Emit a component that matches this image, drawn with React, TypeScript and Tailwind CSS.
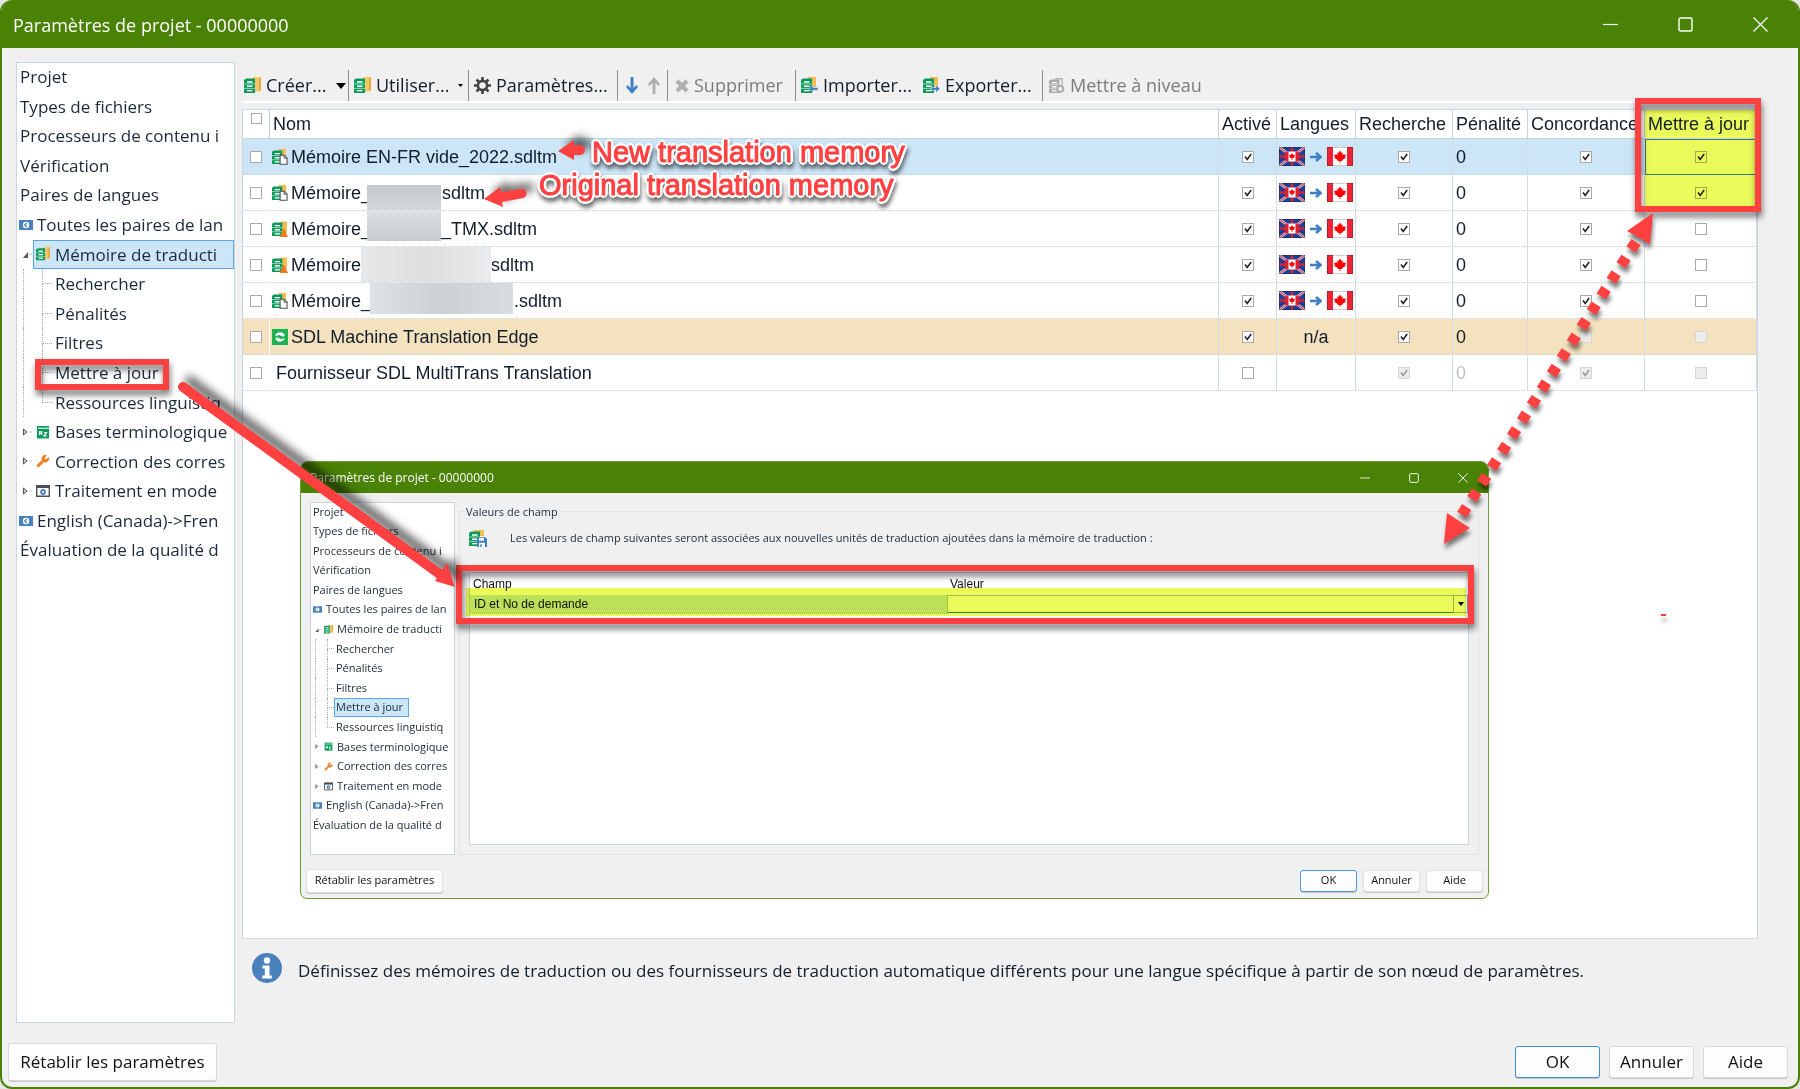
import React, { useState } from "react";
import { Wrench } from "lucide-react";
import { clsx } from "clsx";

type IconProps = { className?: string };

/* ---------- Icons ---------- */

function Slabs({ color = "#0b9a5a" }: { color?: string }) {
  return (
    <g>
      <path d="M0 3 2 1.500h9V16H0z" fill={color} />
      <path d="M3 5h5.500M3 9.300h5.500M3 13.600h5.500" stroke="#fff" strokeWidth="1.400" />
      <path d="M0 7h11M0 11.400h11" stroke="#fff" strokeOpacity=".7" strokeWidth=".8" />
    </g>
  );
}

function MemoryIcon({ className }: IconProps) {
  return (
    <svg viewBox="0 0 17 17" className={className}>
      <path d="M8 1.500 10 0h7v13l-2 1.500H8z" fill="#f6c768" />
      <path d="M15 1.500 17 0v13l-2 1.500z" fill="#e9a93a" />
      <Slabs />
    </svg>
  );
}

function FileMemoryIcon({ className }: IconProps) {
  return (
    <svg viewBox="0 0 17 17" className={className}>
      <path d="M7 0h8v7H7z" fill="#f2bd55" />
      <Slabs />
      <path d="M8.600 6.600h4.600l2.800 2.900v6.700H8.600z" fill="#fff" stroke="#4a4a4a" strokeWidth="1.100" />
      <path d="M12.800 6.800v3h3" fill="none" stroke="#4a4a4a" />
    </svg>
  );
}

function WarningMemoryIcon({ className }: IconProps) {
  return (
    <svg viewBox="0 0 17 17" className={className}>
      <path d="M8 1.500 10 .5h6v12H8z" fill="#f2bd55" />
      <Slabs />
      <path d="M12.500 8 17 17H8z" fill="#ee7a1f" />
    </svg>
  );
}

function TransferMemoryIcon({ className, flip }: IconProps & { flip?: boolean }) {
  return (
    <svg viewBox="0 0 17 17" className={className}>
      <path d="M7 0h8v10H7z" fill="#f2bd55" />
      <Slabs />
      <g transform={flip ? "translate(25 0) scale(-1 1)" : undefined}>
        <path
          d="M8 11.800 12 7.800v2.600h5v2.800h-5v2.600z"
          fill="#3f7fc4"
          stroke="#f0f0f0"
          strokeWidth=".6"
        />
      </g>
    </svg>
  );
}

function UpgradeIcon({ className }: IconProps) {
  return (
    <svg viewBox="0 0 17 17" className={className}>
      <path d="M6 .8h8v6" fill="none" stroke="#b5b5b5" strokeWidth="1.500" />
      <Slabs color="#aaaaaa" />
      <circle cx="12" cy="11.500" r="3.200" fill="#f0f0f0" stroke="#aaa" strokeWidth="2" />
    </svg>
  );
}

function GearIcon({ className }: IconProps) {
  return (
    <svg viewBox="0 0 17 17" className={className}>
      <circle cx="8.500" cy="8.500" r="4.600" fill="none" stroke="#444" strokeWidth="2.600" />
      <path
        d="M8.500 0v4M8.500 13v4M0 8.500h4M13 8.500h4M2.500 2.500l2.800 2.800M11.700 11.700l2.800 2.800M14.500 2.500l-2.800 2.800M5.300 11.700l-2.800 2.800"
        stroke="#444"
        strokeWidth="2.600"
      />
    </svg>
  );
}

function SaveMemoryIcon({ className }: IconProps) {
  return (
    <svg viewBox="0 0 18 17" className={className}>
      <path d="M5 0h10v6H5z" fill="#f2bd55" />
      <Slabs />
      <path d="M8 7h8l2 2v8H8z" fill="#3f7fc4" />
      <path d="M10 7.800h5v3h-5zM10 12.800h6V17h-6z" fill="#fff" />
      <path d="M11.300 14.200h1.500V17h-1.500z" fill="#3f7fc4" />
    </svg>
  );
}

function EdgeIcon({ className }: IconProps) {
  return (
    <svg viewBox="0 0 15 15" className={className}>
      <path d="M0 0h15v15H0z" fill="#1fb254" />
      <path d="M3 6.500a4.800 4.800 0 0 1 9-.5c-1.500 2.200-3 .2-5-.4-1.500-.4-2.800.9-4 .9z" fill="#fff" />
      <path d="M12 8.500a4.800 4.800 0 0 1-9 .5c1.500-2.200 3-.2 5 .4 1.500.4 2.800-.9 4-.9z" fill="#fff" />
    </svg>
  );
}

function PairIcon({ className }: IconProps) {
  return (
    <svg viewBox="0 0 14 10" className={className}>
      <path d="M0 0h14v10H0z" fill="#4a80bb" />
      <circle cx="7" cy="5" r="3.200" fill="#fff" />
      <path d="M7.800 3 5.800 5l2 2" fill="none" stroke="#4a80bb" strokeWidth="1.300" />
    </svg>
  );
}

function TermIcon({ className }: IconProps) {
  return (
    <svg viewBox="0 0 14 14" className={className}>
      <path d="M1 1h12v12.500H1z" fill="#0b9a5a" />
      <path d="M2 3.200h11" stroke="#fff" />
      <path
        d="M3.500 10V6.800h2.200V10M3.500 8.500h2.200M8 7.500h2.500L8 11h2.800"
        fill="none"
        stroke="#fff"
        strokeWidth="1.200"
      />
    </svg>
  );
}

function BatchIcon({ className }: IconProps) {
  return (
    <svg viewBox="0 0 14 14" className={className}>
      <path d="M.7 1.700h12.600v10.600H.7z" fill="#fff" stroke="#4a4f55" strokeWidth="1.400" />
      <path d="M0 1h14v3H0z" fill="#4a4f55" />
      <circle cx="7" cy="8" r="2" fill="none" stroke="#3f7fc4" strokeWidth="1.800" />
    </svg>
  );
}

function ArrowIcon({ className, up }: IconProps & { up?: boolean }) {
  return (
    <svg viewBox="0 0 12 17" className={className}>
      <path
        transform={up ? "rotate(180 6 8.500)" : undefined}
        d="M4.500 0h3v11L10.500 8 12 10l-6 7-6-7 1.500-2 3 3z"
        fill={up ? "#b0b0b0" : "#3f7fc4"}
      />
    </svg>
  );
}

function CrossIcon({ className }: IconProps) {
  return (
    <svg viewBox="0 0 14 14" className={className}>
      <path d="m2 2 10 10M12 2 2 12" stroke="#b0b0b0" strokeWidth="4.200" />
    </svg>
  );
}

const leaf =
  "M13 3.500l1.300 2.200 1.400-.5-.4 2.800 1.900-1 .3 1.100h1.500l-1 2.200.6.700-3.400 2 .2 1H13.400V16h-.8v-2H10.600l.2-1-3.400-2 .6-.7-1-2.200h1.500l.3-1.100 1.900 1-.4-2.800 1.400.5z";

function CanadaFlag({ className }: IconProps) {
  return (
    <svg viewBox="0 0 26 19" className={className}>
      <path d="M0 0h26v19H0z" fill="#fff" />
      <path d="M0 0h6v19H0zM20 0h6v19h-6z" fill="#ee2436" />
      <path d={leaf} fill="#f00" />
      <path d="M.5.5h25v18H.5z" fill="none" stroke="#000" strokeOpacity=".2" />
    </svg>
  );
}

function EnglishCanadaFlag({ className }: IconProps) {
  return (
    <svg viewBox="0 0 26 19" className={className}>
      <path d="M0 0h26v19H0z" fill="#1f3f94" />
      <path d="m0 0 26 19M26 0 0 19" stroke="#e8cfdb" strokeWidth="2.600" />
      <path d="m0 0 26 19M26 0 0 19" stroke="#d2233c" strokeWidth="1" />
      <path d="M13 0v19M0 9.500h26" stroke="#d2233c" strokeWidth="2.500" />
      <path d="M6 4.500h14v10H6z" fill="#fff" />
      <path d="M6 4.500h3.500v10H6zM16.500 4.500H20v10h-3.500z" fill="#e21d2c" />
      <path d="m13 6 1.200 1.700 1.700.5-1 2.500-1.500.5v1.800h-.8v-1.800l-1.500-.5-1-2.500 1.700-.5z" fill="#f00" />
      <path d="M.5.5h25v18H.5z" fill="none" stroke="#000" strokeOpacity=".2" />
    </svg>
  );
}

function InfoIcon({ className }: IconProps) {
  return (
    <svg viewBox="0 0 30 30" className={className}>
      <circle cx="15" cy="15" r="15" fill="#4a80bb" />
      <circle cx="15" cy="7.500" r="3.200" fill="#fff" />
      <path d="M10.500 12.500h7v10h2.300v3h-9.600v-3h2.600v-7h-2.300z" fill="#fff" />
    </svg>
  );
}

/* ---------- Shared pieces ---------- */

function Check({
  label,
  checked = false,
  disabled = false,
  small = false,
  tint = false,
}: {
  label: string;
  checked?: boolean;
  disabled?: boolean;
  small?: boolean;
  tint?: boolean;
}) {
  const [on, setOn] = useState(checked);
  return (
    <span className="relative mx-auto grid w-3 place-items-center">
      <input
        type="checkbox"
        aria-label={label}
        checked={on}
        disabled={disabled}
        onChange={() => setOn(!on)}
        className={clsx(
          "appearance-none border",
          small ? "h-[11px] w-[11px]" : "h-3 w-3",
          disabled
            ? "border-[#d6d6d6] bg-[#ececec]"
            : tint
              ? "border-[#a3ad4c] bg-[#ebfa5b]"
              : "border-[#a9a9a9] bg-white"
        )}
      />
      {on && (
        <svg viewBox="0 0 12 12" className="pointer-events-none absolute h-3 w-3">
          <path
            d="M3 5.500 5.200 8.500 9.200 3"
            fill="none"
            stroke={disabled ? "#9a9a9a" : "#222"}
            strokeWidth="1.600"
          />
        </svg>
      )}
    </span>
  );
}

function WindowControls({ small = false }: { small?: boolean }) {
  const button = clsx("grid place-items-center", small ? "w-[49px]" : "w-[75px]");
  const icon = small ? "h-[10px] w-[10px]" : "h-[15px] w-[15px]";
  return (
    <div className={clsx("flex self-stretch", small && "pr-px")}>
      <button type="button" aria-label="Réduire" className={button}>
        <svg viewBox="0 0 15 15" className={icon}>
          <path d="M0 7.500h15" stroke="#fff" strokeWidth="1.200" />
        </svg>
      </button>
      <button type="button" aria-label="Agrandir" className={button}>
        <svg viewBox="0 0 15 15" className={icon}>
          <rect x="1" y="1" width="13" height="13" rx="1.500" fill="none" stroke="#fff" strokeWidth="1.400" />
        </svg>
      </button>
      <button type="button" aria-label="Fermer" className={button}>
        <svg viewBox="0 0 15 15" className={icon}>
          <path d="m.5.5 14 14M14.500.5l-14 14" stroke="#fff" strokeWidth="1.300" />
        </svg>
      </button>
    </div>
  );
}

interface TreeItem {
  label: string;
  level: 0 | 1 | 2;
  icon?: (props: IconProps) => React.ReactNode;
  expander?: "open" | "closed";
  last?: boolean;
}

const WrenchIcon = ({ className }: IconProps) => (
  <Wrench className={className} fill="#ee7a1f" stroke="#ee7a1f" strokeWidth={1} />
);

const treeItems: TreeItem[] = [
  { label: "Projet", level: 0 },
  { label: "Types de fichiers", level: 0 },
  { label: "Processeurs de contenu i", level: 0 },
  { label: "Vérification", level: 0 },
  { label: "Paires de langues", level: 0 },
  { label: "Toutes les paires de lan", level: 0, icon: PairIcon },
  { label: "Mémoire de traducti", level: 1, icon: MemoryIcon, expander: "open" },
  { label: "Rechercher", level: 2 },
  { label: "Pénalités", level: 2 },
  { label: "Filtres", level: 2 },
  { label: "Mettre à jour", level: 2 },
  { label: "Ressources linguistiq", level: 2, last: true },
  { label: "Bases terminologique", level: 1, icon: TermIcon, expander: "closed" },
  { label: "Correction des corres", level: 1, icon: WrenchIcon, expander: "closed" },
  { label: "Traitement en mode", level: 1, icon: BatchIcon, expander: "closed", last: true },
  { label: "English (Canada)->Fren", level: 0, icon: PairIcon },
  { label: "Évaluation de la qualité d", level: 0 },
];

function Tree({ selected, small = false }: { selected: string; small?: boolean }) {
  const iconSize = small ? "h-[9px] w-[9px]" : "h-[14px] w-[14px]";

  return (
    <ul
      className={clsx(
        "-mt-px grid auto-rows-fr text-[#1c2b3a]",
        small ? "h-[333px] text-[11px]" : "h-[503px] text-[17px]"
      )}
    >
      {treeItems.map((item) => {
        const Icon = item.icon;
        const isSelected = item.label === selected;
        return (
          <li key={item.label} className="flex items-stretch whitespace-nowrap">
            {/* Guide lines of the branch */}
            {item.level > 0 && (
              <span
                className={clsx(
                  "flex shrink-0 items-center",
                  small ? "w-[11px] pl-1" : "w-4 pl-[6px]"
                )}
              >
                {item.expander ? (
                  <svg viewBox="0 0 10 8" className={small ? "h-[5px] w-[7px]" : "h-2 w-[10px]"}>
                    {item.expander === "open" ? (
                      <path d="M0 8h5V2z" fill="#555" />
                    ) : (
                      <path d="M.5 1v6l3.500-3z" fill="#ccc" stroke="#555" />
                    )}
                    <path d="M6 4h4" stroke="#aaa" strokeDasharray="1 1" />
                  </svg>
                ) : (
                  <span className="self-stretch border-l border-dotted border-[#aaa]" />
                )}
              </span>
            )}
            {item.level === 2 && (
              <span className={clsx("flex shrink-0 flex-col", small ? "w-[12px] pl-[5px]" : "w-[19px] pl-[9px]")}>
                <span className="flex-1 border-b border-l border-dotted border-[#aaa]" />
                <span
                  className={clsx("flex-1 border-l border-dotted", item.last ? "border-transparent" : "border-[#aaa]")}
                />
              </span>
            )}
            <button
              type="button"
              className={clsx(
                "flex items-center border",
                small ? "px-[1px]" : "px-[2px]",
                small && item.level === 2 && "pr-[5px]",
                isSelected ? "border-[#5ba7e0] bg-[#cce5f7]" : "border-transparent",
                isSelected && item.level === 1 && "grow"
              )}
            >
              {Icon && (
                <span
                  className={clsx(
                    "flex shrink-0",
                    small ? "w-[13px]" : item.level === 1 ? "w-[19px]" : "-ml-px w-[18px]"
                  )}
                >
                  <Icon className={iconSize} />
                </span>
              )}
              {item.label}
            </button>
          </li>
        );
      })}
    </ul>
  );
}

const dialogButton =
  "rounded-[3px] border bg-[#fdfdfd] text-[#111] shadow-[0_1px_0_#c8c8c8]";

/* ---------- Toolbar ---------- */

function Separator() {
  return <span className="h-[31px] w-px bg-[#8f8f8f]" />;
}

function ToolButton({
  icon,
  label,
  className,
  disabled,
  children,
}: {
  icon: React.ReactNode;
  label: string;
  className?: string;
  disabled?: boolean;
  children?: React.ReactNode;
}) {
  return (
    <button
      type="button"
      disabled={disabled}
      className={clsx(
        "flex h-[31px] shrink-0 items-center gap-[5px] whitespace-nowrap",
        disabled ? "text-[#7c7c7c]" : "text-[#111e2b]",
        className
      )}
    >
      {icon}
      <span>{label}</span>
      {children}
    </button>
  );
}

function Toolbar() {
  const icon = "h-[17px] w-[17px]";
  return (
    <div className="flex items-center border-b-2 border-white text-[18px]">
      <ToolButton className="w-[106px] pl-[2px]" icon={<MemoryIcon className={icon} />} label="Créer...">
        <svg viewBox="0 0 10 6" className="ml-auto mr-[2px] h-[6px] w-[10px]">
          <path d="M0 0h10L5 6z" />
        </svg>
      </ToolButton>
      <Separator />
      <ToolButton className="w-[119px] pl-[5px]" icon={<MemoryIcon className={icon} />} label="Utiliser...">
        <svg viewBox="0 0 5 3" className="ml-auto mr-[5px] h-[3px] w-[5px]">
          <path d="M0 0h5L2.500 3z" />
        </svg>
      </ToolButton>
      <Separator />
      <ToolButton className="w-[148px] pl-[5px]" icon={<GearIcon className={icon} />} label="Paramètres..." />
      <Separator />
      <button type="button" aria-label="Descendre" className="ml-2">
        <ArrowIcon className="h-[17px] w-3" />
      </button>
      <button type="button" aria-label="Monter" disabled className="mr-[7px] ml-[10px]">
        <ArrowIcon up className="h-[17px] w-3" />
      </button>
      <Separator />
      <ToolButton
        disabled
        className="w-[127px] pl-[7px]"
        icon={<CrossIcon className="h-[14px] w-[14px]" />}
        label="Supprimer"
      />
      <Separator />
      <ToolButton className="w-[122px] pl-[5px]" icon={<TransferMemoryIcon className={icon} />} label="Importer..." />
      <ToolButton className="w-[124px] pl-[5px]" icon={<TransferMemoryIcon flip className={icon} />} label="Exporter..." />
      <Separator />
      <ToolButton disabled className="pl-[6px]" icon={<UpgradeIcon className="h-4 w-4" />} label="Mettre à niveau" />
    </div>
  );
}

/* ---------- Provider table ---------- */

type CheckState = "on" | "off" | "disabled" | "disabled-on";

interface ProviderRow {
  id: string;
  name: string;
  tail?: string;
  mask?: string;
  icon?: (props: IconProps) => React.ReactNode;
  languages: "flags" | "n/a" | "";
  enabled: CheckState;
  search: CheckState;
  concordance: CheckState;
  update: CheckState;
  penaltyDisabled?: boolean;
  rowClass?: string;
  highlight?: boolean;
}

const rows: ProviderRow[] = [
  {
    id: "vide",
    name: "Mémoire EN-FR vide_2022.sdltm",
    icon: FileMemoryIcon,
    languages: "flags",
    enabled: "on",
    search: "on",
    concordance: "on",
    update: "on",
    rowClass: "bg-[#cce5f7]",
    highlight: true,
  },
  {
    id: "original",
    name: "Mémoire_",
    tail: "sdltm",
    mask: "-ml-1 mr-px h-[25px] w-[74px] self-end bg-linear-to-b from-[#c3c8cc] to-[#d3d7d9]",
    icon: FileMemoryIcon,
    languages: "flags",
    enabled: "on",
    search: "on",
    concordance: "on",
    update: "on",
    highlight: true,
  },
  {
    id: "tmx",
    name: "Mémoire_",
    tail: "_TMX.sdltm",
    mask: "-ml-1 h-[30px] w-[74px] self-start bg-linear-to-b from-[#dde0e1] to-[#c6cbce]",
    icon: WarningMemoryIcon,
    languages: "flags",
    enabled: "on",
    search: "on",
    concordance: "on",
    update: "off",
  },
  {
    id: "memoire",
    name: "Mémoire",
    tail: "sdltm",
    mask: "h-[35px] w-[130px] bg-linear-to-r from-[#e6e8e9] via-[#dcdedf] to-[#eaebec]",
    icon: WarningMemoryIcon,
    languages: "flags",
    enabled: "on",
    search: "on",
    concordance: "on",
    update: "off",
  },
  {
    id: "memoire-file",
    name: "Mémoire_",
    tail: ".sdltm",
    mask: "-ml-px mr-px h-[31px] w-[143px] self-start bg-linear-to-r from-[#dfe2e4] via-[#ccd1d5] to-[#dadddf]",
    icon: FileMemoryIcon,
    languages: "flags",
    enabled: "on",
    search: "on",
    concordance: "on",
    update: "off",
  },
  {
    id: "edge",
    name: "SDL Machine Translation Edge",
    icon: EdgeIcon,
    languages: "n/a",
    enabled: "on",
    search: "on",
    concordance: "disabled",
    update: "disabled",
    rowClass: "bg-[#f4e1be]",
  },
  {
    id: "multitrans",
    name: "Fournisseur SDL MultiTrans Translation",
    languages: "",
    enabled: "off",
    search: "disabled-on",
    concordance: "disabled-on",
    update: "disabled",
    penaltyDisabled: true,
  },
];

function StateCheck({ state, label, tint }: { state: CheckState; label: string; tint?: boolean }) {
  return (
    <Check
      label={label}
      checked={state === "on" || state === "disabled-on"}
      disabled={state.startsWith("disabled")}
      tint={tint}
    />
  );
}

function ProviderTable() {
  const th = "h-[29px] border-r border-b border-[#c5d2da] p-0 pl-[3px] text-left font-normal whitespace-nowrap overflow-hidden";
  const td = "h-9 border-b border-dotted border-b-[#c5d2da] p-0";
  const cell = clsx(td, "border-r border-r-[#d3dde3] [border-right-style:solid] text-center");

  return (
    <table className="w-full table-fixed border-separate border-spacing-0 font-['Liberation_Sans',Arial,sans-serif] text-[18px] leading-[22px] text-[#111e2b]">
      <colgroup>
        <col className="w-[27px]" />
        <col />
        <col className="w-[58px]" />
        <col className="w-[79px]" />
        <col className="w-[97px]" />
        <col className="w-[75px]" />
        <col className="w-[117px]" />
        <col className="w-[112px]" />
      </colgroup>
      <thead>
        <tr>
          <th className="h-[29px] border-r border-b border-[#c5d2da] p-0 pt-[3px] align-top">
            <Check small label="Tout sélectionner" />
          </th>
          <th className={th}>Nom</th>
          <th className={th}>Activé</th>
          <th className={th}>Langues</th>
          <th className={th}>Recherche</th>
          <th className={th}>Pénalité</th>
          <th className={th}>Concordance</th>
          <th className={clsx(th, "bg-[#ebfa5b]")}>Mettre à jour</th>
        </tr>
      </thead>
      <tbody>
        {rows.map((row) => {
          const Icon = row.icon;
          return (
            <tr key={row.id} className={row.rowClass}>
              <td
                className={clsx(
                  td,
                  "border-r",
                  row.id === "edge" ? "border-r-white [border-right-style:solid]" : "border-r-transparent"
                )}
              >
                <Check label={`Sélectionner ${row.name}`} />
              </td>
              <td className={clsx(cell, "text-left")}>
                <div className="flex h-[35px] items-center pl-[2px] whitespace-nowrap">
                  {Icon ? <Icon className="mr-[3px] h-4 w-4" /> : <span className="w-1" />}
                  {row.name}
                  {row.mask && <span className={clsx("shrink-0", row.mask)} />}
                  {row.tail}
                </div>
              </td>
              <td className={cell}>
                <StateCheck state={row.enabled} label="Activé" />
              </td>
              <td className={cell}>
                {row.languages === "flags" ? (
                  <span className="flex items-center justify-center gap-[5px]">
                    <EnglishCanadaFlag className="h-[19px] w-[26px]" />
                    <svg viewBox="0 0 12 10" className="h-[10px] w-3">
                      <path d="M0 5h9M6 1l4.500 4L6 9" fill="none" stroke="#3f7fc4" strokeWidth="2.600" />
                    </svg>
                    <CanadaFlag className="h-[19px] w-[26px]" />
                  </span>
                ) : (
                  row.languages
                )}
              </td>
              <td className={cell}>
                <StateCheck state={row.search} label="Recherche" />
              </td>
              <td className={clsx(cell, "pl-[3px] text-left", row.penaltyDisabled && "text-[#c0c0c0]")}>0</td>
              <td className={cell}>
                <StateCheck state={row.concordance} label="Concordance" />
              </td>
              <td
                className={clsx(
                  cell,
                  row.highlight && "bg-[#ebfa5b]",
                  row.id === "vide" && "outline -outline-offset-1 outline-[#3b7a80]"
                )}
              >
                <StateCheck state={row.update} label="Mettre à jour" tint={row.highlight} />
              </td>
            </tr>
          );
        })}
      </tbody>
    </table>
  );
}

/* ---------- Floating field values dialog ---------- */

function FieldDialog() {
  const button = clsx(dialogButton, "h-[22px] w-[57px] text-[11px]");
  return (
    <section className="absolute top-[351px] left-[57px] flex h-[438px] w-[1189px] flex-col overflow-hidden rounded-t-lg rounded-b-[7px] border border-[#6b9e3a] bg-[#f0f0f0] text-[11px] text-[#1c2b3a]">
      <header className="flex h-[31px] shrink-0 items-center justify-between bg-[#498205] pl-[9px] text-xs text-white">
        <h2>Paramètres de projet - 00000000</h2>
        <WindowControls small />
      </header>
      <div className="flex flex-1 gap-1 pt-[9px] pr-[9px] pl-[9px]">
        <nav className="w-[145px] shrink-0 overflow-hidden border border-[#c5d8e0] bg-white">
          <Tree small selected="Mettre à jour" />
        </nav>
        <fieldset className="flex min-w-0 flex-1 flex-col border border-[#e2e2e2] px-[9px] pb-[9px]">
          <legend className="-ml-1 px-px leading-[19px]">Valeurs de champ</legend>
          <p className="flex h-[34px] items-center gap-[23px]">
            <SaveMemoryIcon className="h-[17px] w-[18px]" />
            Les valeurs de champ suivantes seront associées aux nouvelles unités de traduction ajoutées dans la mémoire de
            traduction :
          </p>
          <div className="relative mt-[17px] flex-1 border border-[#c5d8e0] bg-white">
            <table className="w-full table-fixed border-collapse font-['Liberation_Sans',Arial,sans-serif] text-xs text-[#111]">
              <colgroup>
                <col className="w-[477px]" />
                <col />
              </colgroup>
              <thead>
                <tr className="h-[22px] text-left">
                  <th className="p-0 pl-[3px] font-normal">Champ</th>
                  <th className="p-0 pl-[3px] font-normal">Valeur</th>
                </tr>
              </thead>
              <tbody>
                <tr className="h-[18px]">
                  <td className="border-b border-dotted border-[#9fb9a0] bg-[#cce5f7] p-0 pl-1">ID et No de demande</td>
                  <td className="p-0">
                    <div className="relative flex">
                      <select
                        aria-label="Valeur"
                        className="h-[18px] w-full appearance-none border border-[#a9c3c4] border-b-[#2f86a8] bg-white"
                      />
                      <span className="pointer-events-none absolute inset-y-0 right-0 grid w-[15px] place-items-center border border-[#a8b4a8]">
                        <svg viewBox="0 0 6 4" className="h-1 w-[6px]">
                          <path d="M0 0h6L3 4z" />
                        </svg>
                      </span>
                    </div>
                  </td>
                </tr>
              </tbody>
            </table>
            <span className="pointer-events-none absolute top-[15px] right-[2px] -left-1 h-7 bg-[#ebfa5b] mix-blend-multiply" />
          </div>
        </fieldset>
      </div>
      <footer className="flex h-[43px] shrink-0 items-center gap-[6px] pt-2 pr-[5px] pl-[5px]">
        <button type="button" className={clsx(dialogButton, "mr-auto h-6 w-[137px] border-[#e2e2e2]")}>
          Rétablir les paramètres
        </button>
        <button type="button" className={clsx(button, "border-[#4a9ade]")}>
          OK
        </button>
        <button type="button" className={clsx(button, "border-[#e2e2e2]")}>
          Annuler
        </button>
        <button type="button" className={clsx(button, "border-[#e2e2e2]")}>
          Aide
        </button>
      </footer>
    </section>
  );
}

/* ---------- Callouts drawn over the windows ---------- */

function Callouts() {
  const note =
    "absolute whitespace-nowrap font-['Liberation_Sans',Arial,sans-serif] text-[29px] leading-8 text-[#ff4040] [-webkit-text-stroke:1px_#ff4040] [text-shadow:3px_0_#fff,-3px_0_#fff,0_3px_#fff,0_-3px_#fff,2px_2px_#fff,-2px_2px_#fff,2px_-2px_#fff,-2px_-2px_#fff] drop-shadow-[1px_4px_2px_rgba(0,0,0,0.55)]";
  return (
    <div className="pointer-events-none absolute inset-0 overflow-hidden">
      <svg width="1800" height="1089" viewBox="0 0 1800 1089" className="absolute top-0 left-0">
        <g fill="none" stroke="#ff4040" className="drop-shadow-[1px_5px_3px_rgba(0,0,0,0.55)]">
          <rect x="38" y="362" width="128" height="25" strokeWidth="6" />
          <rect x="1638" y="101" width="120" height="108" strokeWidth="6" />
          <rect x="459" y="568" width="1012" height="53" strokeWidth="6" />
        </g>
        <g fill="#ff4040" className="drop-shadow-[7px_-6px_4px_rgba(0,0,0,0.6)]">
          <path d="M183 387 441 575" stroke="#ff4040" strokeWidth="10" strokeLinecap="round" />
          <path d="m455 587-20-6 12-18z" />
          <path d="m558 151 16-11v5h6a4 4 0 0 1 0 10l-6 0v5z" />
          <path d="m484 199 16-12 1 5 20-3a4 4 0 0 1 2 9l-21 4 1 5z" />
        </g>
        <g fill="#ff4040" className="drop-shadow-[1px_5px_2px_rgba(0,0,0,0.5)]">
          <path d="M1636 242 1461 516" stroke="#ff4040" strokeWidth="11" strokeDasharray="9 9.500" />
          <path d="m1653 213-26 18 23 13zM1444 544l3-31 23 15z" />
          <path d="M1661 614h5v2h-5z" />
        </g>
      </svg>
      <p className={clsx(note, "top-[136px] left-[592px]")}>New translation memory</p>
      <p className={clsx(note, "top-[169px] left-[539px]")}>Original translation memory</p>
    </div>
  );
}

export default function App() {
  const footerButton = clsx(dialogButton, "h-8 w-[85px]");

  return (
    <div className="relative min-h-screen bg-[#e6e6e6] font-['Open_Sans','Noto_Sans',sans-serif]">
      <div className="flex min-h-screen flex-col overflow-hidden rounded-xl border-2 border-t-0 border-[#498205] bg-[#f0f0f0]">
        <header className="flex h-12 shrink-0 items-center justify-between bg-[#498205] pl-[11px] text-[18px] text-white">
          <h1 className="pt-[2px]">Paramètres de projet - 00000000</h1>
          <WindowControls />
        </header>

        <main className="flex flex-1 gap-[7px] pt-[14px] pl-[14px]">
          <nav className="w-[219px] shrink-0 overflow-hidden border border-[#c5d8e0] bg-white">
            <Tree selected="Mémoire de traducti" />
          </nav>

          <div className="flex min-w-0 flex-1 flex-col pt-2 pr-10">
            <Toolbar />
            <div className="relative mt-[6px] flex-1 border border-[#c9d6dd] bg-white">
              <ProviderTable />
              <FieldDialog />
            </div>
            <div className="flex h-[84px] shrink-0 items-start gap-4 pt-[14px] pl-[10px] text-[17px] text-[#111e2b]">
              <InfoIcon className="h-[30px] w-[30px] shrink-0" />
              <p className="pt-[5px] leading-[26px]">
                Définissez des mémoires de traduction ou des fournisseurs de traduction automatique différents pour une
                langue spécifique à partir de son nœud de paramètres.
              </p>
            </div>
          </div>
        </main>

        <footer className="flex h-16 shrink-0 items-center gap-[9px] pt-[14px] pr-[10px] pl-[6px] text-[17px]">
          <button type="button" className={clsx(dialogButton, "mr-auto h-[38px] w-[209px] border-[#dadada]")}>
            Rétablir les paramètres
          </button>
          <button type="button" className={clsx(footerButton, "border-[#3b8fd6]")}>
            OK
          </button>
          <button type="button" className={clsx(footerButton, "border-[#dadada]")}>
            Annuler
          </button>
          <button type="button" className={clsx(footerButton, "border-[#dadada]")}>
            Aide
          </button>
        </footer>
      </div>
      <Callouts />
    </div>
  );
}
